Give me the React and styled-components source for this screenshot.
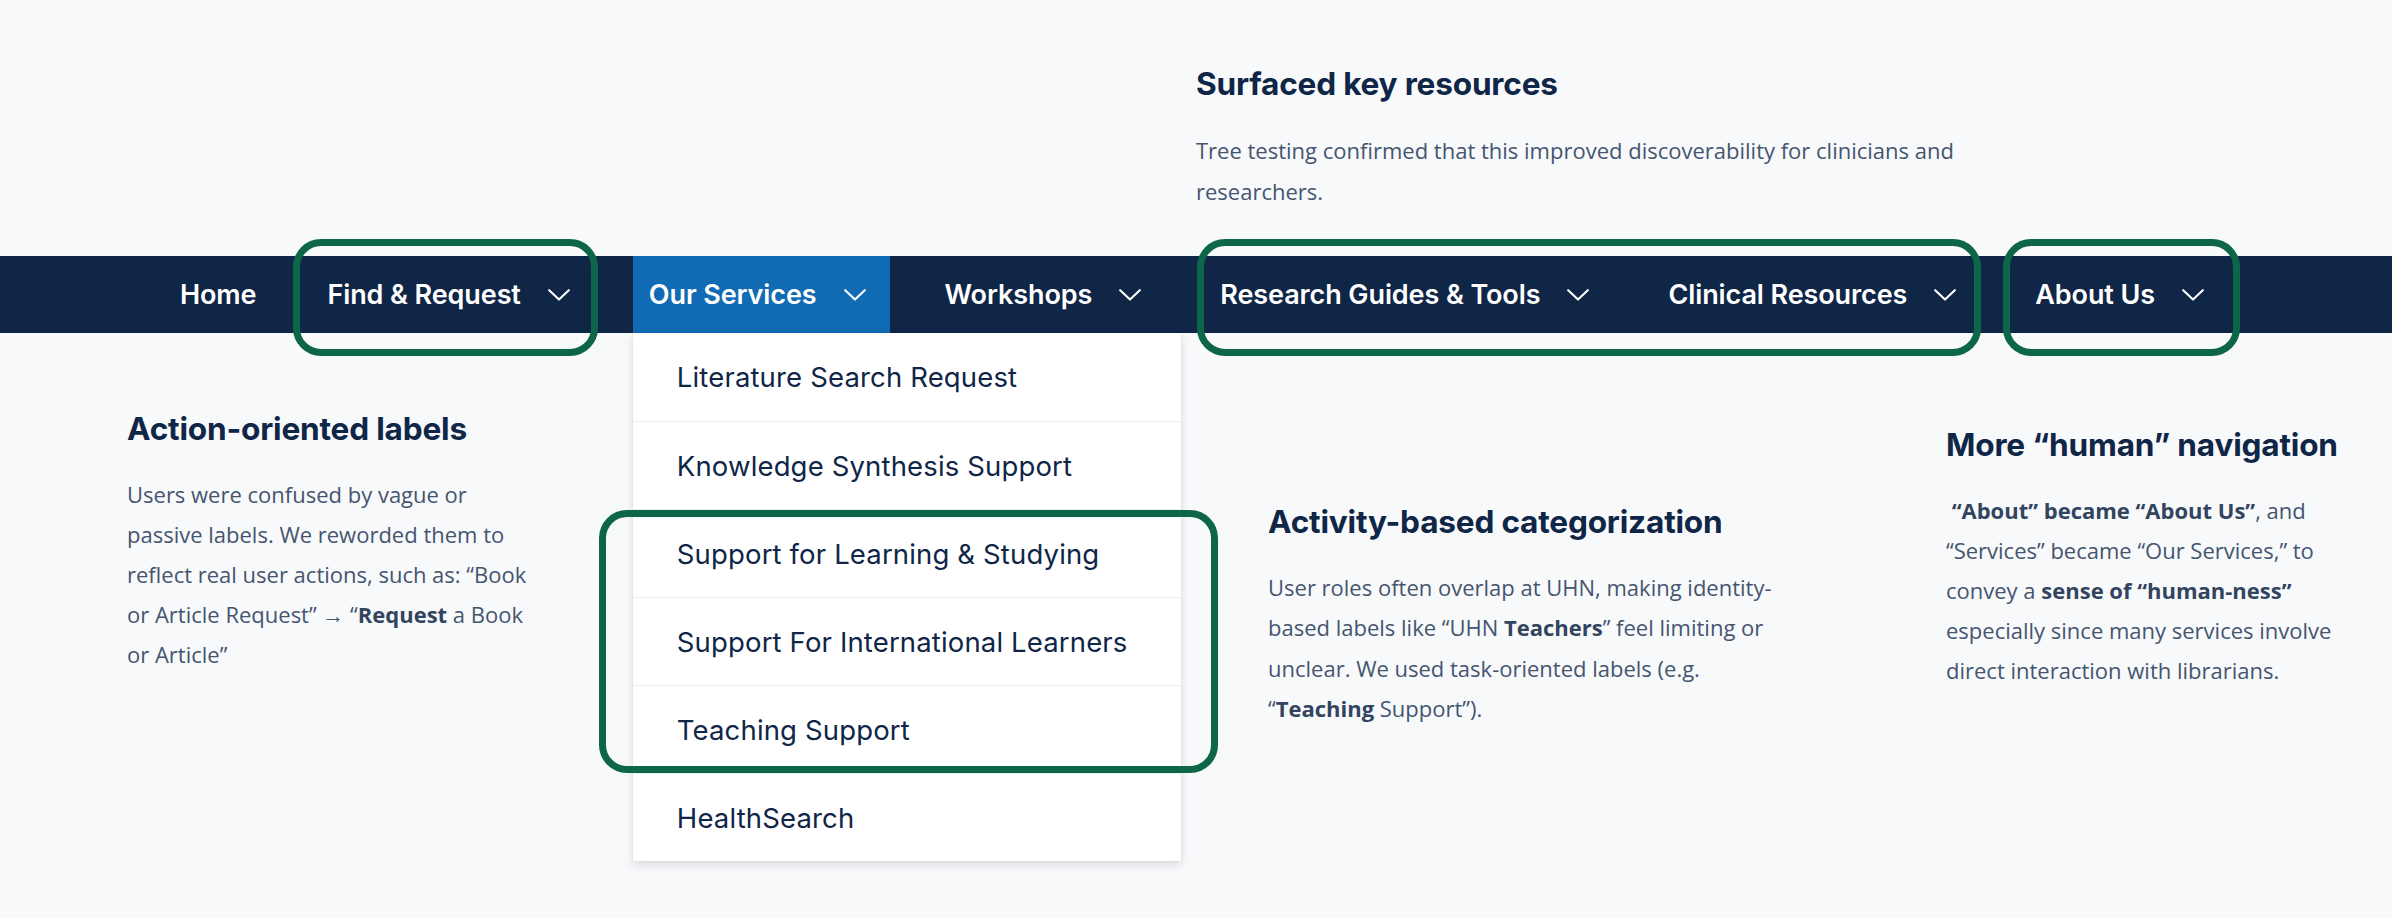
import React from "react";
import styled, { createGlobalStyle } from "styled-components";

const NAVY = "#0f2647";
const BLUE = "#116bb4";
const GREEN = "#0d6649";
const BODY = "#45556f";

const GlobalStyle = createGlobalStyle`
  html, body { margin: 0; padding: 0; background: #f8f9fb; }
  body {
    width: 2392px;
    height: 918px;
    overflow: hidden;
    font-family: "Open Sans", "Noto Sans", sans-serif;
    -webkit-font-smoothing: antialiased;
  }
  * { box-sizing: border-box; }
`;

const Page = styled.div`
  width: 2392px;
  height: 918px;
  display: flex;
  flex-direction: column;
`;

const Intro = styled.section`
  margin-left: 1196px;
  padding: 65px 0 44px 0;
`;

const Heading = styled.h2`
  margin: 0 0 ${(p) => p.$gap ?? 26}px 0;
  font-family: Inter, "Noto Sans", sans-serif;
  font-weight: 700;
  font-size: 31.6px;
  line-height: 38px;
  letter-spacing: -0.2px;
  color: ${NAVY};
  white-space: nowrap;
`;

const Para = styled.p`
  margin: 0;
  font-family: "Open Sans", "Noto Sans", sans-serif;
  font-size: 22px;
  line-height: ${(p) => p.$lh ?? 40}px;
  color: ${BODY};
  white-space: nowrap;

  b {
    font-weight: 700;
    color: #33445f;
  }
`;

const NavBar = styled.nav`
  position: relative;
  z-index: 3;
  height: 77px;
  background: ${NAVY};
  display: flex;
  justify-content: center;
  align-items: stretch;
  gap: 39px;
`;

const Group = styled.div`
  position: relative;
  display: flex;
  align-items: stretch;
  gap: ${(p) => p.$gap ?? 39}px;
  flex-direction: ${(p) => (p.$column ? "column" : "row")};

  &::after {
    content: "";
    position: absolute;
    top: ${(p) => -p.$t}px;
    right: ${(p) => -p.$r}px;
    bottom: ${(p) => -p.$b}px;
    left: ${(p) => -p.$l}px;
    border: 7px solid ${GREEN};
    border-radius: 28px;
    pointer-events: none;
    z-index: 6;
  }
`;

const NavItem = styled.div`
  position: relative;
  display: flex;
  align-items: center;
  gap: 27px;
  padding: 0 ${(p) => (p.$chevron ? 24 : 16)}px 0 16px;
  background: ${(p) => (p.$active ? BLUE : "transparent")};
  color: #ffffff;
  font-family: Inter, "Noto Sans", sans-serif;
  font-weight: 600;
  font-size: 27px;
  letter-spacing: -0.1px;
  white-space: nowrap;
  cursor: pointer;
`;

const Chevron = () => (
  <svg width="22" height="12" viewBox="0 0 22 12" fill="none" aria-hidden="true">
    <polyline
      points="1.2,1.2 11,10.6 20.8,1.2"
      stroke="#ffffff"
      strokeWidth="2.1"
      strokeLinecap="round"
      strokeLinejoin="round"
    />
  </svg>
);

const Dropdown = styled.div`
  position: absolute;
  top: 100%;
  left: 0;
  width: 548px;
  background: #ffffff;
  box-shadow: 0 4px 9px rgba(20, 30, 50, 0.13), 0 0 3px rgba(20, 30, 50, 0.06);
  display: flex;
  flex-direction: column;
  z-index: 5;
`;

const DropItem = styled.div`
  height: 88px;
  display: flex;
  align-items: center;
  padding-left: 44px;
  border-top: ${(p) => (p.$first ? "none" : "1px solid #eceef2")};
  font-family: Inter, "Noto Sans", sans-serif;
  font-weight: 400;
  font-size: 27.5px;
  letter-spacing: 0.15px;
  color: ${NAVY};
  white-space: nowrap;
`;

const Notes = styled.section`
  display: grid;
  grid-template-columns: 1141px 678px auto;
  padding-left: 127px;
  align-items: start;
`;

const Note = styled.div`
  margin-top: ${(p) => p.$top}px;
`;

const Item = ({ label, active, chevron = true, children }) => (
  <NavItem $active={active} $chevron={chevron}>
    <span>{label}</span>
    {chevron && <Chevron />}
    {children}
  </NavItem>
);

export default function App() {
  return (
    <>
      <GlobalStyle />
      <Page>
        <Intro>
          <Heading $gap={27}>Surfaced key resources</Heading>
          <Para $lh={41}>
            Tree testing confirmed that this improved discoverability for clinicians and
            <br />
            researchers.
          </Para>
        </Intro>

        <NavBar>
          <Item label="Home" chevron={false} />
          <Group $t={17} $b={23} $l={18} $r={4}>
            <Item label={"Find & Request"} />
          </Group>
          <Item label="Our Services" active>
            <Dropdown>
              <DropItem $first>Literature Search Request</DropItem>
              <DropItem>Knowledge Synthesis Support</DropItem>
              <Group $column $gap={0} $t={-1} $b={0} $l={34} $r={37}>
                <DropItem>Support for Learning &amp; Studying</DropItem>
                <DropItem>Support For International Learners</DropItem>
                <DropItem>Teaching Support</DropItem>
              </Group>
              <DropItem>HealthSearch</DropItem>
            </Dropdown>
          </Item>
          <Item label="Workshops" />
          <Group $t={17} $b={23} $l={7} $r={1}>
            <Item label={"Research Guides & Tools"} />
            <Item label="Clinical Resources" />
          </Group>
          <Group $t={17} $b={23} $l={16} $r={12}>
            <Item label="About Us" />
          </Group>
        </NavBar>

        <Notes>
          <Note $top={77}>
            <Heading>Action-oriented labels</Heading>
            <Para>
              Users were confused by vague or
              <br />
              passive labels. We reworded them to
              <br />
              reflect real user actions, such as: “Book
              <br />
              or Article Request” → “<b>Request</b> a Book
              <br />
              or Article”
            </Para>
          </Note>
          <Note $top={170}>
            <Heading>Activity-based categorization</Heading>
            <Para $lh={40.3}>
              User roles often overlap at UHN, making identity-
              <br />
              based labels like “UHN <b>Teachers</b>” feel limiting or
              <br />
              unclear. We used task-oriented labels (e.g.
              <br />
              “<b>Teaching</b> Support”).
            </Para>
          </Note>
          <Note $top={93}>
            <Heading>More “human” navigation</Heading>
            <Para>
              &nbsp;<b>“About” became “About Us”</b>, and
              <br />
              “Services” became “Our Services,” to
              <br />
              convey a <b>sense of “human-ness”</b>
              <br />
              especially since many services involve
              <br />
              direct interaction with librarians.
            </Para>
          </Note>
        </Notes>
      </Page>
    </>
  );
}
